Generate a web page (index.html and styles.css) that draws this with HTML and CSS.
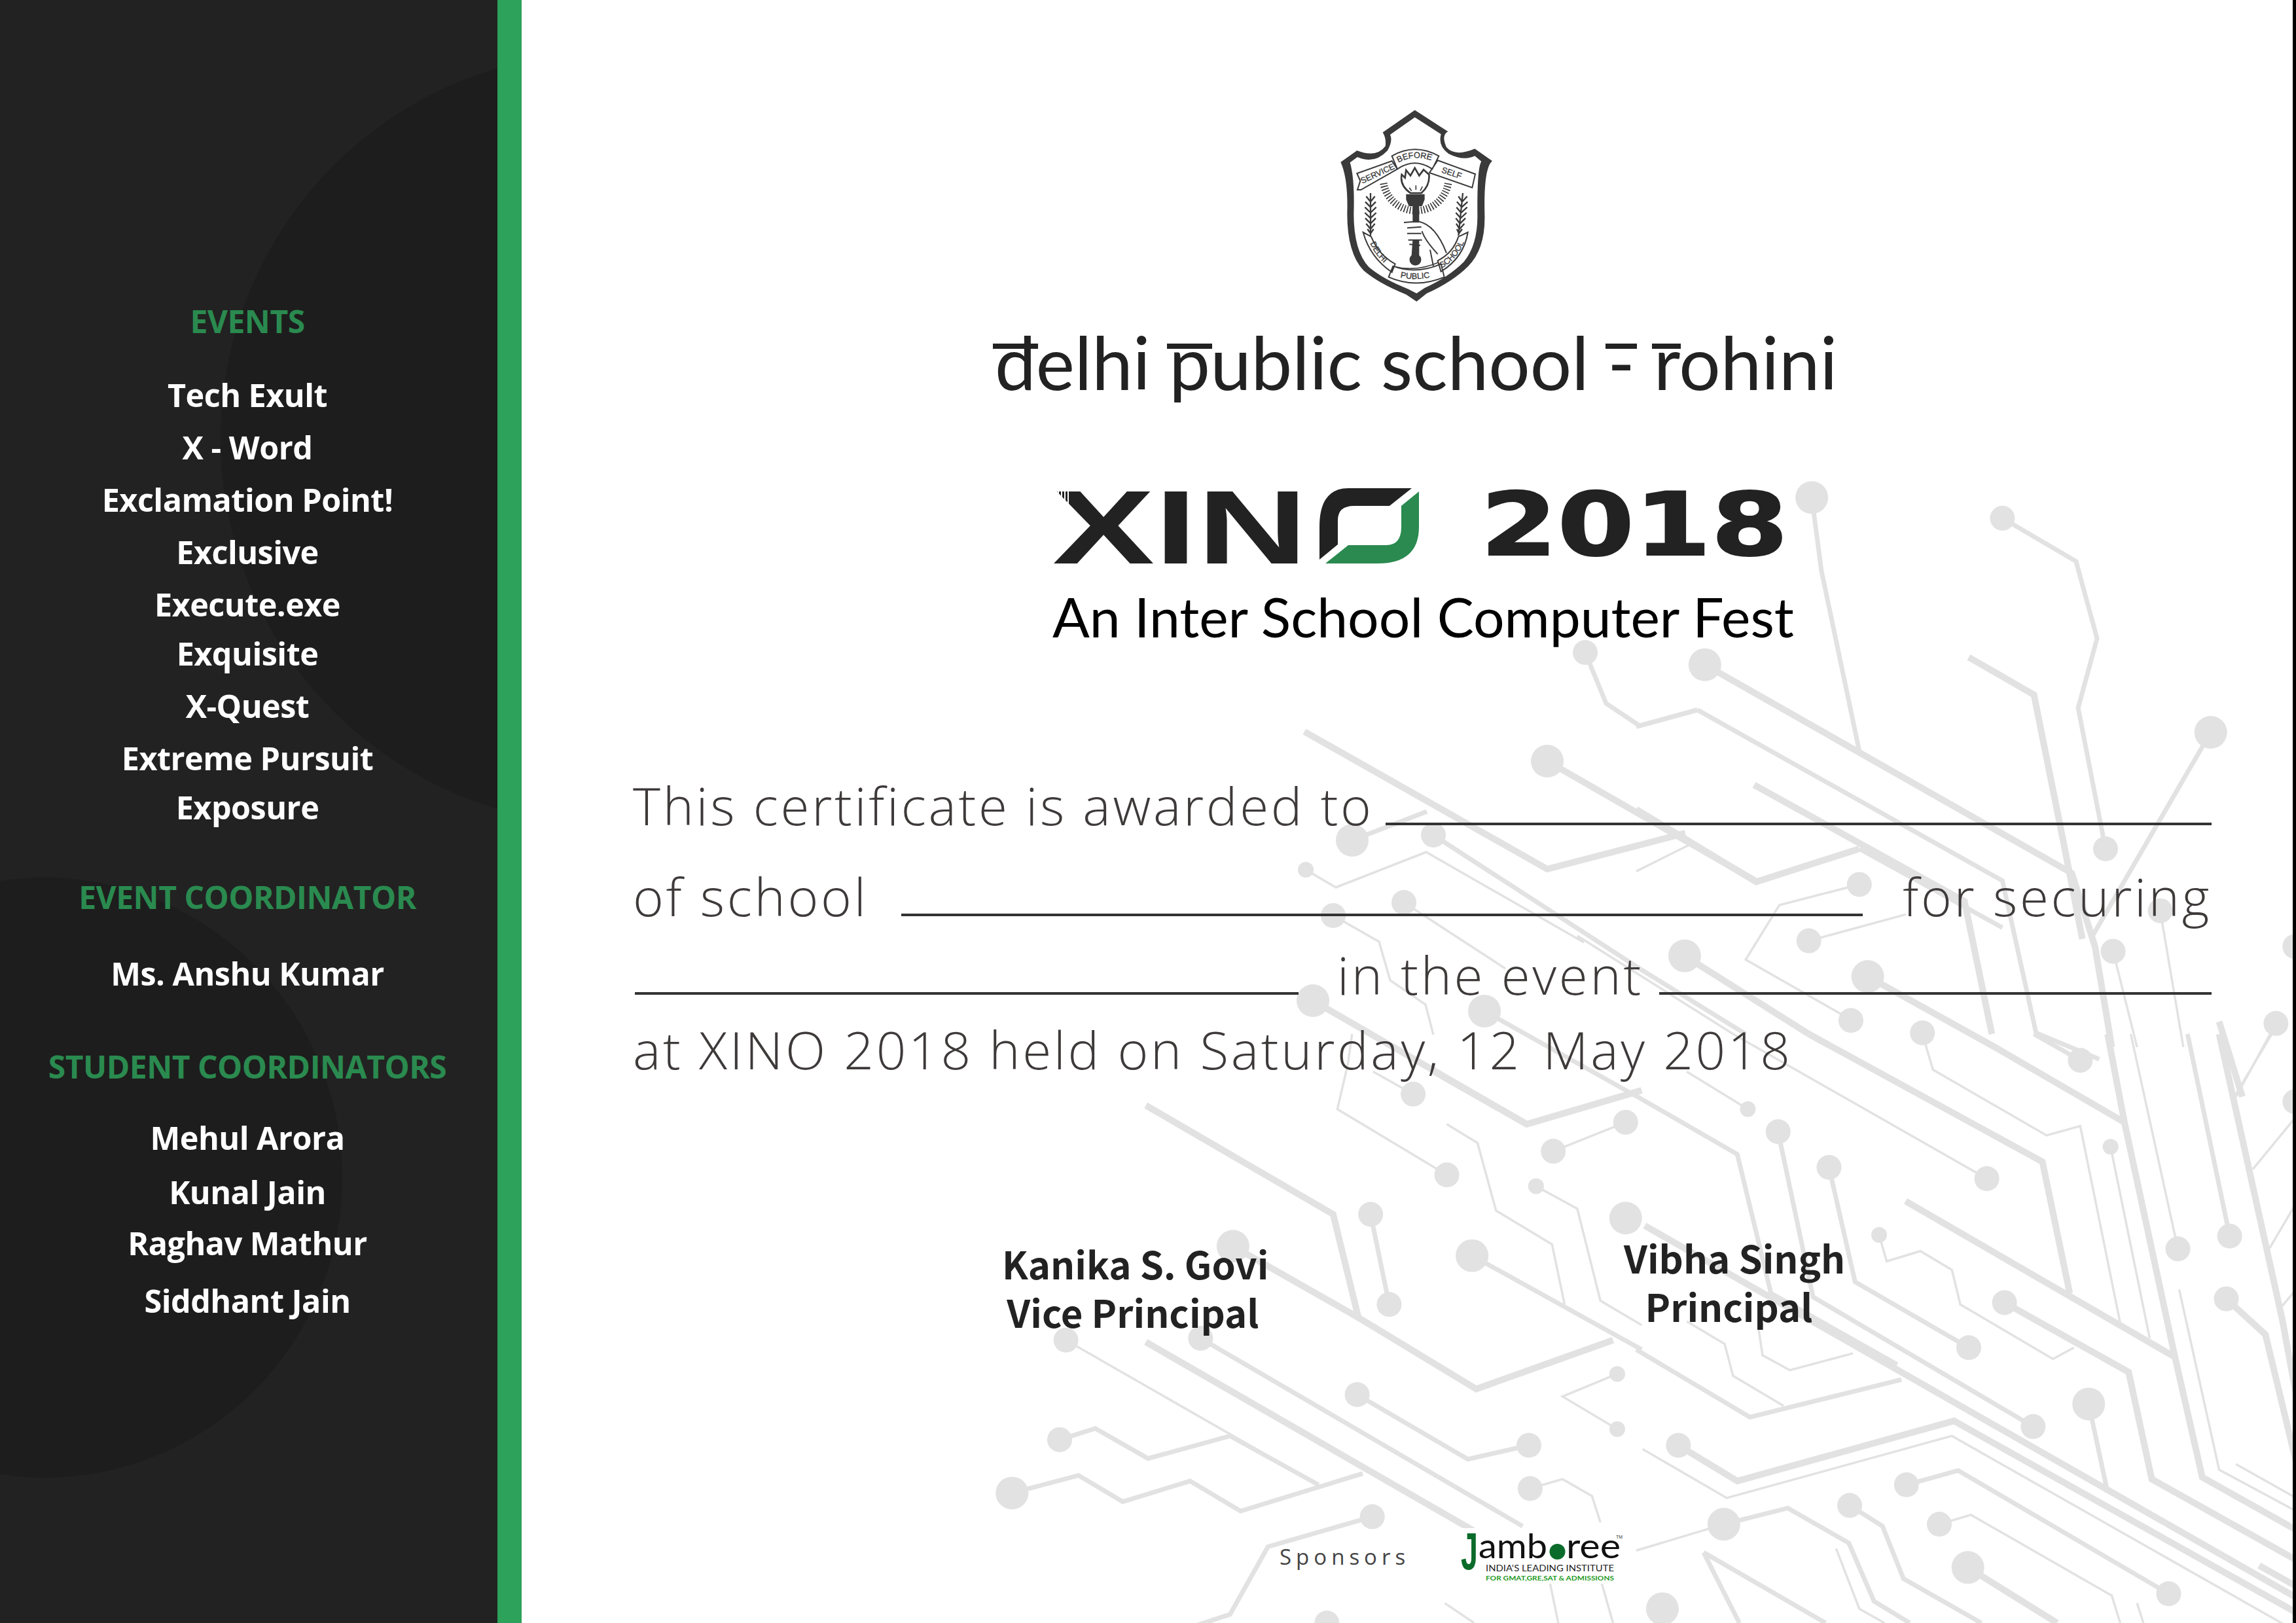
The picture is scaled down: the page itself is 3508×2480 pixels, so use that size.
FILE: index.html
```html
<!DOCTYPE html>
<html lang="en">
<head>
    <meta charset="UTF-8">
    <title>XINO 2018 Certificate</title>
    <link rel="stylesheet" href="styles.css">
</head>
<body>
    <aside class="sidebar">
        <h2 class="side-title">EVENTS</h2>
        <ul class="side-list">
            <li>Tech Exult</li>
            <li>X - Word</li>
            <li>Exclamation Point!</li>
            <li>Exclusive</li>
            <li>Execute.exe</li>
            <li class="tight">Exquisite</li>
            <li>X-Quest</li>
            <li>Extreme Pursuit</li>
            <li class="tight">Exposure</li>
        </ul>
        <h2 class="side-title coord">EVENT COORDINATOR</h2>
        <ul class="side-list">
            <li>Ms. Anshu Kumar</li>
        </ul>
        <h2 class="side-title students">STUDENT COORDINATORS</h2>
        <ul class="side-list">
            <li>Mehul Arora</li>
            <li class="loose">Kunal Jain</li>
            <li class="tight-s">Raghav Mathur</li>
            <li class="looser">Siddhant Jain</li>
        </ul>
    </aside>
    <div class="green-bar"></div>

    <main class="sheet">
        <!-- circuit board drawn behind the text -->
        <svg class="circuit" viewBox="797 0 2706 2480" aria-hidden="true">
            <g transform="translate(2500 700) scale(.643 .574)">
                <path class="trace thick" d="M163 550L1035 1105L1090 1300L1130 1568M790 530L945 630L1020 1050L1060 1280M280 870L780 1180L845 1533M0 935L285 1128L530 1040M115 1325L410 1533M550 1380L860 1573M1385 1500L1440 1700"/>
                <path class="trace mid" d="M417 105L440 300L530 780M870 160L1045 275L1095 480L1050 665L1115 1040M1365 730L1080 1280M145 670L870 1125L950 1530L1100 1600M0 715L145 670M530 1040L870 1250"/>
                <path class="trace thin" d="M530 1135L340 1190L260 1335L510 1495M410 1285L640 1215M0 1100L125 1030M1133 1313L1190 1568M1245 1205L1300 1568M1520 1505L1425 1700"/>
                <path class="node big" d="M417 105h.1M163 550h.1M1365 730h.1M115 1325h.1M550 1380h.1"/>
                <path class="node med" d="M870 160h.1M1115 1040h.1M530 1135h.1M410 1285h.1M510 1497h.1M680 1530h.1M1133 1313h.1M1245 1205h.1M1520 1505h.1M1565 1300h.1"/>
            </g>
            <g transform="translate(2500 1580) scale(.643 .574)">
                <path class="trace thick" d="M860 40L1160 235L1280 860L1345 1180L1568 1320M1120 0L1160 235M1385 0L1535 760L1568 960M410 0L965 340L1030 690M640 445L1280 860M875 715L1170 900L1225 1185L1568 1400M1402 705L1495 800L1568 1140M20 510L1568 1500M100 1095L240 1190L755 1030L1568 1540M1480 1415L1568 1470M788 1420L1000 1568"/>
                <path class="trace mid" d="M945 0L1055 70M1310 0L1410 538M0 165L240 320L320 690L620 880M337 260L420 700L943 1045M458 355L520 660L790 835M1075 985L1120 1220M0 840L270 1020L630 920M642 1200L765 1162L1265 1490M208 1305L360 1262L505 1355L565 1510L650 1568M507 1255L585 1310L635 1450L820 1568M160 1380L450 1568M160 1380L245 1568"/>
                <path class="trace thin" d="M1175 0L1287 572M680 0L705 95L975 270L1055 245L1150 770M1127 300L1220 810M230 0L833 385M120 100L265 200M1510 0L1425 160M1568 220L1465 360M1568 450L1505 570M1568 680L1530 730M577 535L595 605L675 578L750 628L770 720L990 865L1040 835M1290 680L1385 1160L1568 1270M1425 1145L1568 1235M15 1105L215 1235L750 1070L1568 1590M120 765L210 825L230 910L350 990M290 780L300 855L365 895L515 850M720 1305L795 1280L1130 1495L1150 1568M0 1375L208 1305M475 1370L530 1530L590 1568M1190 1515L1205 1568"/>
                <path class="node big" d="M1075 985h.1M208 1305h.1M788 1420h.1M62 1530h.1"/>
                <path class="node med" d="M1055 70h.1M1287 572h.1M1410 538h.1M1565 180h.1M833 385h.1M337 260h.1M458 355h.1M943 1045h.1M790 835h.1M875 715h.1M1402 705h.1M100 1095h.1M642 1200h.1M1265 1490h.1M720 1305h.1M507 1255h.1"/>
                <path class="node small" d="M1127 300h.1M265 200h.1M577 535h.1"/>
            </g>
            <g transform="translate(1500 1580) scale(.643 .574)">
                <path class="trace thick" d="M390 820L1320 1420M390 190L835 480L895 755M597 565L895 755L1175 945L1500 815M1075 100L1295 240L1568 150"/>
                <path class="trace mid" d="M924 480L968 720M1165 590L1568 840M520 810L1285 1310M892 960L1155 1132L1300 1095M72 1222L230 1175L335 1245L495 1190L615 1270L905 1170M185 1080L270 1050L395 1130L590 1070L800 1200M928 1285L680 1365L590 1545L440 1600"/>
                <path class="trace thin" d="M1105 375L845 200L870 80L880 0M1105 240L1178 290L1222 470L1355 560L1385 720M1317 405L1415 465L1470 710L1568 775M930 100L1025 160M1358 312L1530 235M200 815L800 1200M1510 905L1380 965L1510 1052M1303 1210L1380 1185L1450 1230L1470 1300M1100 1515L1170 1568M1350 1460L1370 1568M1470 1450L1500 1568"/>
                <path class="node big" d="M597 565h.1M1165 590h.1M1530 490h.1M72 1222h.1"/>
                <path class="node med" d="M924 480h.1M968 720h.1M1105 375h.1M1025 160h.1M1358 312h.1M1530 235h.1M200 815h.1M520 810h.1M892 960h.1M1300 1095h.1M185 1080h.1M928 1285h.1M1303 1210h.1M820 1568h.1"/>
                <path class="node small" d="M1317 405h.1M1510 905h.1M1510 1052h.1"/>
            </g>
            <g class="upper">
                <path class="trace thick" d="M1993 1118L2364 1328L2575 1273M2364 1163L2684 1347M2006 1529L2333 1718"/>
                <path class="trace mid" d="M2190 1276L2505 1480L2667 1580M2422 997L2454 1075L2505 1109L2593 1085M2066 1284L2180 1240M2268 1545L2500 1675"/>
                <path class="trace thin" d="M1995 1329L2041 1356L2179 1302L2420 1440M2037 1399L2107 1439L2124 1498L2178 1535L2190 1581M2145 1379L2300 1480M2410 1430L2648 1580"/>
                <path class="node big" d="M2364 1163h.1M2066 1284h.1M2006 1529h.1M2268 1545h.1"/>
                <path class="node med" d="M2422 997h.1M2190 1276h.1M2037 1399h.1M2145 1379h.1"/>
                <path class="node small" d="M1995 1329h.1"/>
            </g>
        </svg>

        <svg class="crest" viewBox="0 0 1140 1020" role="img" aria-label="Delhi Public School crest">
            <path class="crest-dark" d="M545 85L697 183Q665 200 690 255Q730 300 820 262L900 318Q860 350 865 560Q870 720 790 800Q720 870 600 925L553 962L505 930Q380 880 310 820Q235 740 235 560Q240 400 205 323L280 270Q370 305 410 250Q415 215 398 187Z"/>
            <path class="crest-paper" d="M545 118L665 195Q650 250 700 285Q770 320 820 295L850 320Q830 350 832 560Q835 700 770 780Q700 850 590 900L553 925L515 905Q400 860 335 805Q265 730 265 560Q270 400 248 325L282 300Q360 335 420 270Q445 225 432 197Z"/>
            <path class="crest-rays" d="M402 420A150 150 0 0 0 698 420"/>
            <path class="crest-line" d="M440 800Q550 830 660 780"/>
            <path class="crest-ribbon" d="M280 375L440 318L465 355L298 450L282 450L295 410ZM650 315L822 378L808 440L612 372ZM440 295Q545 235 655 295L625 355Q545 300 465 355ZM308 645L345 665Q380 750 455 790L440 828Q340 760 308 645ZM788 645L745 665Q720 740 650 775L665 825Q770 760 788 645ZM445 800Q550 840 665 790L680 850Q550 905 425 850Z"/>
            <path class="crest-fill" d="M505 360L525 385L545 350L565 385L585 358L610 380Q615 430 575 465L525 465Q475 430 485 380L500 395Z"/>
            <path class="crest-cut" d="M520 440L530 455M550 430V450M580 435L570 455"/>
            <path class="crest-dark" d="M505 470H590V495L578 525H518L505 495ZM535 525H565V600H535ZM535 680H565V750A27 27 0 1 1 530 750Z"/>
            <path class="crest-hand" d="M495 600L560 595Q640 610 690 740M510 625L575 620M510 650L575 650M515 680L578 680M520 700L570 705M578 640Q590 680 650 745M615 725L630 800"/>
            <g class="crest-leaf">
                <path d="M342 465V660M322 480L342 505L362 480M318 505L342 530L366 505M316 530L342 555L368 530M316 555L342 580L368 555M318 580L342 605L366 580M322 605L342 630L362 605M328 630L342 650L356 630"/>
                <path d="M765 465L745 660M745 480L762 505L785 480M738 505L760 530L787 505M736 530L757 555L785 530M733 555L755 580L782 555M733 580L752 605L777 580M735 605L750 630L772 605M738 630L747 650L762 630"/>
            </g>
            <defs>
                <path id="arc-before" d="M470 326Q545 282 650 326"/>
                <path id="arc-service" d="M304 422L478 342"/>
                <path id="arc-self" d="M665 370L795 414"/>
                <path id="arc-delhi" d="M340 695Q370 765 445 820"/>
                <path id="arc-public" d="M478 852Q550 868 645 846"/>
                <path id="arc-school" d="M668 810Q755 760 782 655"/>
            </defs>
            <text class="crest-text"><textPath href="#arc-before">BEFORE</textPath></text>
            <text class="crest-text"><textPath href="#arc-service">SERVICE</textPath></text>
            <text class="crest-text"><textPath href="#arc-self">SELF</textPath></text>
            <text class="crest-text"><textPath href="#arc-delhi">DELHI</textPath></text>
            <text class="crest-text"><textPath href="#arc-public">PUBLIC</textPath></text>
            <text class="crest-text"><textPath href="#arc-school">SCHOOL</textPath></text>
        </svg>

        <h1 class="school"><span class="bar-d">d</span>elhi <span class="bar-top">p</span>ublic school <span class="bar-top">-</span> <span class="bar-top">r</span>ohini</h1>

        <svg class="xino" viewBox="1608 746 1120 118" role="img" aria-label="XINO 2018">
            <text class="xino-word" x="1608" y="861" textLength="390" lengthAdjust="spacingAndGlyphs">XIN</text>
            <path class="xino-hatch" d="M1612 746V774M1617 746V774M1622 746V774M1627 746V774M1632 746V774"/>
            <path class="xino-dark" d="M2157 746L2123 773H2069Q2044 773 2044 795V832L2016 855V805Q2016 746 2060 746Z"/>
            <path class="xino-green" d="M2168 751L2141 773V805Q2141 833 2118 833H2060L2025 861H2105Q2168 861 2168 805Z"/>
            <text class="xino-year" x="2262" y="848" textLength="470" lengthAdjust="spacingAndGlyphs">2018</text>
        </svg>

        <p class="tagline">An Inter School Computer Fest</p>

        <section class="award">
            <div class="award-row first">
                <span>This certificate is awarded to</span>
                <i class="rule"></i>
            </div>
            <div class="award-row second">
                <span>of school</span>
                <i class="rule"></i>
                <span class="for-text">for securing</span>
            </div>
            <div class="award-row third">
                <i class="rule student-rule"></i>
                <span>in the event</span>
                <i class="rule event-rule"></i>
            </div>
            <div class="award-row fourth">
                <span>at XINO 2018 held on Saturday, 12 <span class="award-date">May 2018</span></span>
            </div>
        </section>

        <section class="signs">
            <p class="sign vice">Kanika S. Govi<br>Vice Principal</p>
            <p class="sign head">Vibha Singh<br><span class="sign-role">Principal</span></p>
        </section>

        <footer class="sponsors">
            <span class="sponsor-label">Sponsors</span>
            <svg class="jamboree" viewBox="0 0 255 85" role="img" aria-label="Jamboree">
                <rect width="255" height="85" fill="#fff"/>
                <text class="jam-j" x="3" y="63" textLength="26" lengthAdjust="spacingAndGlyphs">J</text>
                <text class="jam-word" x="30" y="46" textLength="105" lengthAdjust="spacingAndGlyphs">amb</text>
                <circle cx="150.5" cy="36" r="12" fill="#0a6b2a"/>
                <text class="jam-word" x="164" y="46" textLength="83" lengthAdjust="spacingAndGlyphs">ree</text>
                <text class="jam-tm" x="240" y="16">TM</text>
                <text class="jam-line" x="41" y="66" textLength="196" lengthAdjust="spacingAndGlyphs">INDIA'S LEADING INSTITUTE</text>
                <text class="jam-sub" x="41" y="80" textLength="196" lengthAdjust="spacingAndGlyphs">FOR GMAT,GRE,SAT &amp; ADMISSIONS</text>
            </svg>
        </footer>
    </main>
    <div class="edge"></div>
</body>
</html>
```

FILE: styles.css
```css
* {
    margin: 0;
    padding: 0;
    box-sizing: border-box;
}

body {
    width: 3508px;
    height: 2480px;
    display: flex;
    overflow: hidden;
    background: #fff;
    font-family: 'Open Sans', sans-serif;
}

/* left column */
.sidebar {
    position: relative;
    width: 760px;
    flex: none;
    overflow: hidden;
    background: #222;
    padding: 460px 4px 0 0;
    text-align: center;
}

.sidebar::before,
.sidebar::after {
    content: '';
    position: absolute;
    border-radius: 50%;
    background: #1d1d1d;
}

.sidebar::before {
    left: 337px;
    top: 80px;
    width: 1180px;
    height: 1180px;
}

.sidebar::after {
    left: -387px;
    top: 1341px;
    width: 910px;
    height: 917px;
}

.side-title,
.side-list {
    position: relative;
    z-index: 1;
}

.side-title {
    color: #2a8a4f;
    font-size: 48px;
    font-weight: 700;
    line-height: 62px;
    letter-spacing: -0.5px;
}

.side-title.coord {
    margin-top: 67px;
}

.side-title.students {
    margin-top: 72px;
}

.side-list {
    list-style: none;
    margin-top: 41px;
    color: #fff;
    font-size: 48.5px;
    font-weight: 700;
    line-height: 80px;
    letter-spacing: -0.5px;
}

.coord + .side-list {
    margin-top: 45px;
}

.students + .side-list {
    margin-top: 37px;
}

.side-list .tight {
    margin-top: -5px;
}

.side-list .loose {
    margin-top: 3px;
}

.side-list .tight-s {
    margin-top: -2px;
}

.side-list .looser {
    margin-top: 8px;
}

.green-bar {
    width: 37px;
    flex: none;
    background: #2ca25a;
}

.edge {
    width: 5px;
    flex: none;
    background: #000;
}

/* certificate */
.sheet {
    position: relative;
    flex: 1;
    padding-top: 140px;
    display: flex;
    flex-direction: column;
    align-items: flex-start;
    color: #222;
}

.sheet > * {
    position: relative;
}

.sheet > .circuit {
    position: absolute;
    left: 0;
    top: 0;
    width: 2706px;
    height: 2480px;
}

.trace,
.node {
    fill: none;
    stroke: #e2e2e2;
    vector-effect: non-scaling-stroke;
}

.trace.thick { stroke-width: 10px; }
.trace.mid { stroke-width: 7px; }
.trace.thin { stroke-width: 3.5px; }

.node {
    stroke-linecap: round;
}

.node.big { stroke-width: 50px; }
.node.med { stroke-width: 38px; }
.node.small { stroke-width: 24px; }

/* crest */
.crest {
    width: 380px;
    height: 340px;
    margin-left: 1183px;
}

.crest-dark { fill: #3a3a3a; }
.crest-paper { fill: #fff; }
.crest-fill { fill: #fff; stroke: #3a3a3a; stroke-width: 8; }
.crest-cut { fill: none; stroke: #3a3a3a; stroke-width: 5; }
.crest-ribbon { fill: #fff; stroke: #3a3a3a; stroke-width: 6; }
.crest-line { fill: none; stroke: #3a3a3a; stroke-width: 5; }
.crest-hand { fill: none; stroke: #3a3a3a; stroke-width: 6; }
.crest-leaf { fill: none; stroke: #3a3a3a; stroke-width: 7; }

.crest-rays {
    fill: none;
    stroke: #3a3a3a;
    stroke-width: 34;
    stroke-dasharray: 5 8;
}

.crest-text {
    font-family: 'Liberation Sans', sans-serif;
    font-size: 38px;
    fill: #3a3a3a;
    stroke: #3a3a3a;
    stroke-width: 1;
}

/* heading block */
.school {
    margin: 0 0 0 723px;
    height: 170px;
    color: #222;
    font-family: 'Lato', sans-serif;
    font-size: 112px;
    font-weight: 400;
    line-height: 146px;
    white-space: nowrap;
}

.bar-d,
.bar-top {
    position: relative;
}

.bar-d::before,
.bar-top::before {
    content: '';
    position: absolute;
    left: -3px;
    right: -3px;
    top: 40px;
    height: 8px;
    background: #222;
}

.xino {
    width: 1120px;
    height: 118px;
    margin: 96px 0 0 811px;
    overflow: visible;
}

.xino-word {
    font-family: 'Liberation Sans', sans-serif;
    font-size: 160px;
    font-weight: 700;
    fill: #222;
}

.xino-year {
    font-family: 'DejaVu Sans', sans-serif;
    font-size: 133px;
    font-weight: 700;
    fill: #222;
    stroke: #222;
    stroke-width: 2;
}

.xino-dark { fill: #222; }
.xino-green { fill: #2a8a4f; }

.xino-hatch {
    fill: none;
    stroke: #fff;
    stroke-width: 2;
}

.tagline {
    margin: 30px 0 0 811px;
    color: #000;
    font-family: 'Lato', sans-serif;
    font-size: 84px;
    line-height: 96px;
    white-space: nowrap;
}

/* award text */
.award {
    width: 2412px;
    margin: 185px 0 0 170px;
    color: #3e3a3a;
    font-size: 80px;
    font-weight: 300;
    line-height: 110px;
    letter-spacing: 3.7px;
}

.award-row {
    display: flex;
    align-items: baseline;
    white-space: nowrap;
}

.award-row.first { height: 139px; gap: 18px; }
.award-row.second { height: 120px; gap: 51px; }
.award-row.third { height: 114px; gap: 59px; }
.award-row.fourth { height: 110px; }

.rule {
    flex: 1;
    height: 4px;
    background: #333;
}

.for-text {
    margin-left: 10px;
}

.student-rule {
    flex: none;
    width: 1014px;
    margin-left: 3px;
}

.event-rule {
    margin-left: -35px;
}

.award-date {
    margin-left: 8px;
}

/* signatures */
.signs {
    display: flex;
    align-items: flex-start;
    margin: 235px 0 0 734px;
}

.sign {
    width: 400px;
    color: #222;
    font-family: 'Noto Sans CJK SC', sans-serif;
    font-size: 58px;
    font-weight: 700;
    line-height: 74px;
    text-align: center;
    white-space: nowrap;
}

.sign.head {
    margin: -9px 0 0 550px;
    width: 333px;
}

.sign-role {
    margin-left: -12px;
}

/* sponsor row */
.sponsors {
    display: flex;
    align-items: flex-start;
    margin: 294px 0 0 1158px;
}

.sponsor-label {
    margin-top: 22px;
    color: #444;
    font-size: 33px;
    line-height: 44px;
    letter-spacing: 7px;
}

.jamboree {
    width: 255px;
    height: 85px;
    margin-left: 75px;
    overflow: visible;
}

.jam-j {
    font-family: 'Liberation Sans', sans-serif;
    font-size: 80px;
    font-weight: 700;
    fill: #0a6b2a;
}

.jam-word {
    font-family: 'Lato', sans-serif;
    font-size: 52px;
    fill: #111;
}

.jam-tm {
    font-family: 'Liberation Sans', sans-serif;
    font-size: 7px;
    fill: #333;
}

.jam-line {
    font-family: 'Lato', sans-serif;
    font-size: 14px;
    fill: #222;
}

.jam-sub {
    font-family: 'Lato', sans-serif;
    font-size: 10px;
    font-weight: 700;
    fill: #1f9a1f;
}
```
